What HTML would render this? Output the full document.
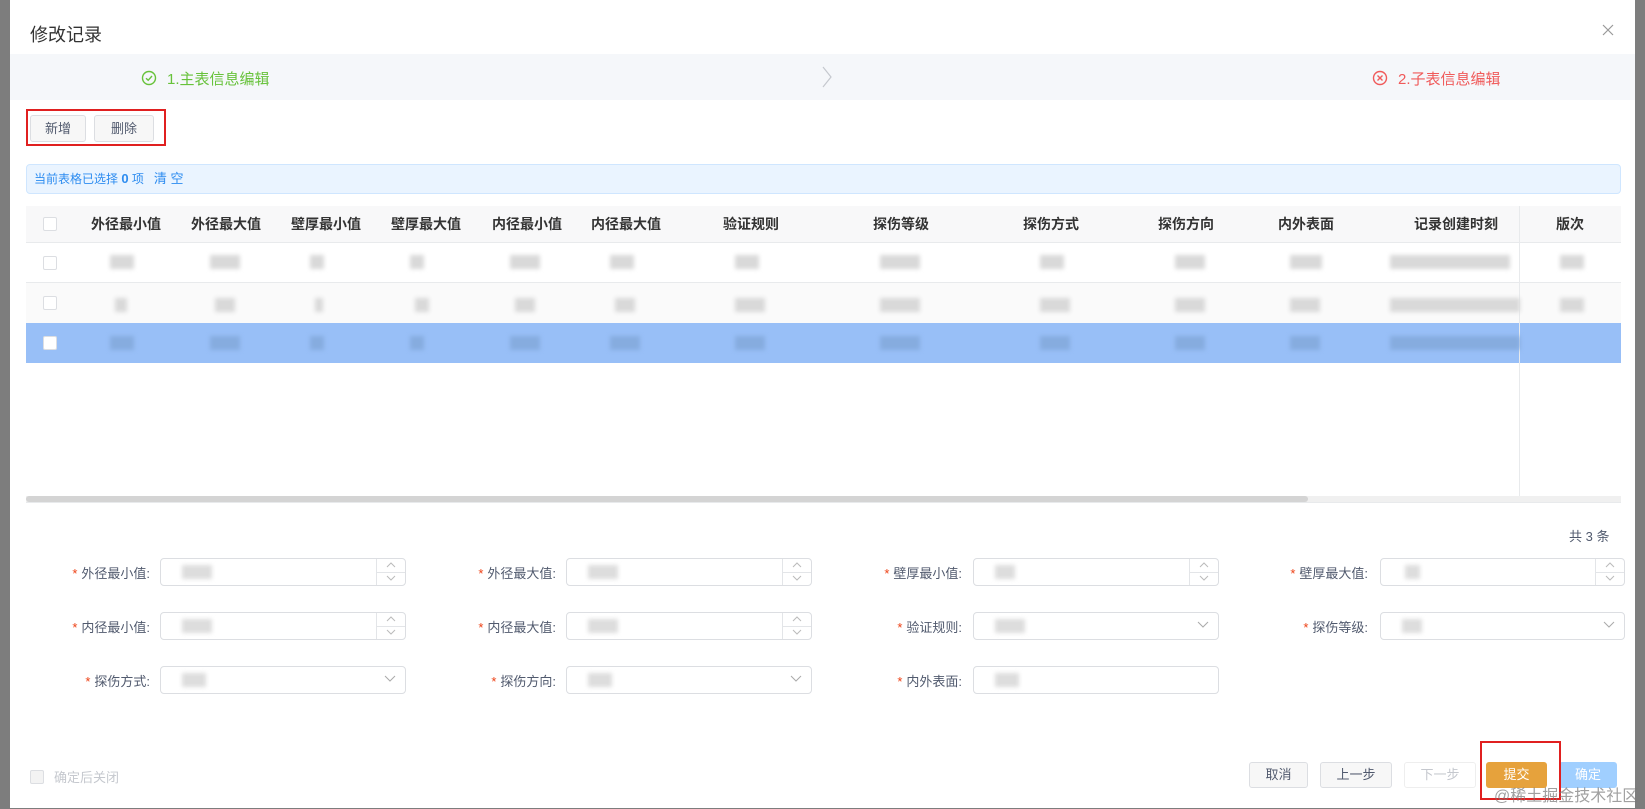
<!DOCTYPE html>
<html><head><meta charset="utf-8"><style>
*{box-sizing:border-box;margin:0;padding:0}
body{width:1645px;height:809px;overflow:hidden;background:#7d7d7d;font-family:"Liberation Sans","Noto Sans CJK SC",sans-serif;position:relative;color:#515a6e}
.a{position:absolute}
.dlg{position:absolute;left:10px;top:0;width:1625px;height:808px;background:#fff}
.btn{position:absolute;border:1px solid #dcdee2;border-radius:3px;background:#f7f7f7;font-size:13px;text-align:center;color:#515a6e}
.th{position:absolute;top:206px;height:37px;line-height:37px;font-size:14px;font-weight:bold;color:#333;transform:translateX(-50%);white-space:nowrap}
.blk{position:absolute;height:14px;background:#d9d9d9;filter:blur(2px)}
.lbl{position:absolute;font-size:13px;color:#515a6e;text-align:right;width:140px}
.lbl b{color:#ed4014;font-weight:normal;margin-right:4px}
.inp{position:absolute;height:28px;border:1px solid #dcdee2;border-radius:4px;background:#fff}
.sp{position:absolute;right:0;top:0;width:29px;height:26px;border-left:1px solid #e3e5e8}
.sp:after{content:"";position:absolute;left:0;right:0;top:13px;border-top:1px solid #e3e5e8}
.sp svg{position:absolute;left:9px}
.cb{position:absolute;width:14px;height:14px;border:1px solid #dcdee2;border-radius:2px;background:#fff}
</style></head><body>
<div class="dlg">
<div class="a" style="left:20px;top:21px;font-size:18px;color:#333">修改记录</div>
<svg class="a" style="left:1592px;top:24px" width="12" height="12"><path d="M1 1L11 11M11 1L1 11" stroke="#999" stroke-width="1.2"/></svg>
<div class="a" style="left:0;top:54px;width:1625px;height:46px;background:#f5f7fa"></div>
<svg class="a" style="left:131px;top:70px" width="16" height="16"><circle cx="8" cy="8" r="6.5" fill="none" stroke="#67c23a" stroke-width="1.4"/><path d="M5 8.2L7.2 10.3L11 6" fill="none" stroke="#67c23a" stroke-width="1.4"/></svg>
<div class="a" style="left:157px;top:68px;font-size:15px;color:#67c23a">1.主表信息编辑</div>
<svg class="a" style="left:811px;top:66px" width="12" height="22"><path d="M2 1L10 11L2 21" fill="none" stroke="#c5c8ce" stroke-width="1.2"/></svg>
<svg class="a" style="left:1362px;top:70px" width="16" height="16"><circle cx="8" cy="8" r="6.5" fill="none" stroke="#f05a5a" stroke-width="1.4"/><path d="M5.5 5.5L10.5 10.5M10.5 5.5L5.5 10.5" stroke="#f05a5a" stroke-width="1.4"/></svg>
<div class="a" style="left:1388px;top:68px;font-size:15px;color:#f05a5a">2.子表信息编辑</div>
<div class="a" style="left:16px;top:109px;width:140px;height:37px;border:2px solid #e02020"></div>
<div class="btn" style="left:20px;top:115px;width:56px;height:27px;line-height:25px">新增</div>
<div class="btn" style="left:84px;top:115px;width:60px;height:27px;line-height:25px">删除</div>
<div class="a" style="left:16px;top:164px;width:1595px;height:30px;background:#eaf4ff;border:1px solid #cfe6ff;border-radius:4px;font-size:12px;color:#2d8cf0;line-height:28px;padding-left:7px">当前表格已选择 <b style="font-size:13px">0</b> 项 &nbsp; <span style="font-size:13px">清 空</span></div>
<div class="a" style="left:16px;top:206px;width:1595px;height:37px;background:#f8f8f9;border-bottom:1px solid #e8eaec"></div>
<div class="a" style="left:16px;top:243px;width:1595px;height:40px;background:#fff;border-bottom:1px solid #e8eaec"></div>
<div class="a" style="left:16px;top:283px;width:1595px;height:40px;background:#fafafa"></div>
<div class="a" style="left:16px;top:323px;width:1595px;height:40px;background:#98bff7"></div>
<div class="a" style="left:1509px;top:206px;width:1px;height:290px;background:#e8eaec"></div>
<div class="a" style="left:16px;top:496px;width:1595px;height:6px;background:#f0f0f0"></div>
<div class="a" style="left:16px;top:496px;width:1282px;height:6px;background:#d4d4d4;border-radius:3px"></div>
<div class="a" style="left:16px;top:502px;width:1595px;height:1px;background:#e8eaec"></div>
<div class="cb" style="left:33px;top:217px"></div>
<div class="cb" style="left:33px;top:256px"></div>
<div class="cb" style="left:33px;top:296px"></div>
<div class="cb" style="left:33px;top:336px"></div>
<div class="th" style="left:116px">外径最小值</div>
<div class="th" style="left:216px">外径最大值</div>
<div class="th" style="left:316px">壁厚最小值</div>
<div class="th" style="left:416px">壁厚最大值</div>
<div class="th" style="left:517px">内径最小值</div>
<div class="th" style="left:616px">内径最大值</div>
<div class="th" style="left:741px">验证规则</div>
<div class="th" style="left:891px">探伤等级</div>
<div class="th" style="left:1041px">探伤方式</div>
<div class="th" style="left:1176px">探伤方向</div>
<div class="th" style="left:1296px">内外表面</div>
<div class="th" style="left:1446px">记录创建时刻</div>
<div class="th" style="left:1560px">版次</div>
<div class="blk" style="left:100px;top:255px;width:24px"></div><div class="blk" style="left:200px;top:255px;width:30px"></div><div class="blk" style="left:300px;top:255px;width:14px"></div><div class="blk" style="left:400px;top:255px;width:14px"></div><div class="blk" style="left:500px;top:255px;width:30px"></div><div class="blk" style="left:600px;top:255px;width:24px"></div><div class="blk" style="left:725px;top:255px;width:24px"></div><div class="blk" style="left:870px;top:255px;width:40px"></div><div class="blk" style="left:1030px;top:255px;width:24px"></div><div class="blk" style="left:1165px;top:255px;width:30px"></div><div class="blk" style="left:1280px;top:255px;width:32px"></div><div class="blk" style="left:1380px;top:255px;width:120px"></div><div class="blk" style="left:1550px;top:255px;width:24px"></div>
<div class="blk" style="left:105px;top:298px;width:12px"></div><div class="blk" style="left:205px;top:298px;width:20px"></div><div class="blk" style="left:305px;top:298px;width:8px"></div><div class="blk" style="left:405px;top:298px;width:14px"></div><div class="blk" style="left:505px;top:298px;width:20px"></div><div class="blk" style="left:605px;top:298px;width:20px"></div><div class="blk" style="left:725px;top:298px;width:30px"></div><div class="blk" style="left:870px;top:298px;width:40px"></div><div class="blk" style="left:1030px;top:298px;width:30px"></div><div class="blk" style="left:1165px;top:298px;width:30px"></div><div class="blk" style="left:1280px;top:298px;width:30px"></div><div class="blk" style="left:1380px;top:298px;width:130px"></div><div class="blk" style="left:1550px;top:298px;width:24px"></div>
<div class="blk" style="left:100px;top:336px;width:24px;background:#86acdf"></div><div class="blk" style="left:200px;top:336px;width:30px;background:#86acdf"></div><div class="blk" style="left:300px;top:336px;width:14px;background:#86acdf"></div><div class="blk" style="left:400px;top:336px;width:14px;background:#86acdf"></div><div class="blk" style="left:500px;top:336px;width:30px;background:#86acdf"></div><div class="blk" style="left:600px;top:336px;width:30px;background:#86acdf"></div><div class="blk" style="left:725px;top:336px;width:30px;background:#86acdf"></div><div class="blk" style="left:870px;top:336px;width:40px;background:#86acdf"></div><div class="blk" style="left:1030px;top:336px;width:30px;background:#86acdf"></div><div class="blk" style="left:1165px;top:336px;width:30px;background:#86acdf"></div><div class="blk" style="left:1280px;top:336px;width:30px;background:#86acdf"></div><div class="blk" style="left:1380px;top:336px;width:130px;background:#86acdf"></div>
<div class="a" style="left:1559px;top:526px;font-size:13px;color:#515a6e">共 3 条</div>
<!-- form -->
<div class="lbl" style="left:0;top:563px"><b>*</b>外径最小值:</div>
<div class="inp" style="left:150px;top:558px;width:246px"><div class="sp"><svg style="top:3px" width="10" height="6"><path d="M1 5L5 1L9 5" fill="none" stroke="#bbb"/></svg><svg style="top:16px" width="10" height="6"><path d="M1 1L5 5L9 1" fill="none" stroke="#bbb"/></svg></div></div>
<div class="lbl" style="left:406px;top:563px"><b>*</b>外径最大值:</div>
<div class="inp" style="left:556px;top:558px;width:246px"><div class="sp"><svg style="top:3px" width="10" height="6"><path d="M1 5L5 1L9 5" fill="none" stroke="#bbb"/></svg><svg style="top:16px" width="10" height="6"><path d="M1 1L5 5L9 1" fill="none" stroke="#bbb"/></svg></div></div>
<div class="lbl" style="left:812px;top:563px"><b>*</b>壁厚最小值:</div>
<div class="inp" style="left:963px;top:558px;width:246px"><div class="sp"><svg style="top:3px" width="10" height="6"><path d="M1 5L5 1L9 5" fill="none" stroke="#bbb"/></svg><svg style="top:16px" width="10" height="6"><path d="M1 1L5 5L9 1" fill="none" stroke="#bbb"/></svg></div></div>
<div class="lbl" style="left:1218px;top:563px"><b>*</b>壁厚最大值:</div>
<div class="inp" style="left:1370px;top:558px;width:245px"><div class="sp"><svg style="top:3px" width="10" height="6"><path d="M1 5L5 1L9 5" fill="none" stroke="#bbb"/></svg><svg style="top:16px" width="10" height="6"><path d="M1 1L5 5L9 1" fill="none" stroke="#bbb"/></svg></div></div>
<div class="lbl" style="left:0;top:617px"><b>*</b>内径最小值:</div>
<div class="inp" style="left:150px;top:612px;width:246px"><div class="sp"><svg style="top:3px" width="10" height="6"><path d="M1 5L5 1L9 5" fill="none" stroke="#bbb"/></svg><svg style="top:16px" width="10" height="6"><path d="M1 1L5 5L9 1" fill="none" stroke="#bbb"/></svg></div></div>
<div class="lbl" style="left:406px;top:617px"><b>*</b>内径最大值:</div>
<div class="inp" style="left:556px;top:612px;width:246px"><div class="sp"><svg style="top:3px" width="10" height="6"><path d="M1 5L5 1L9 5" fill="none" stroke="#bbb"/></svg><svg style="top:16px" width="10" height="6"><path d="M1 1L5 5L9 1" fill="none" stroke="#bbb"/></svg></div></div>
<div class="lbl" style="left:812px;top:617px"><b>*</b>验证规则:</div>
<div class="inp" style="left:963px;top:612px;width:246px"></div>
<div class="lbl" style="left:1218px;top:617px"><b>*</b>探伤等级:</div>
<div class="inp" style="left:1370px;top:612px;width:245px"></div>
<div class="lbl" style="left:0;top:671px"><b>*</b>探伤方式:</div>
<div class="inp" style="left:150px;top:666px;width:246px"></div>
<div class="lbl" style="left:406px;top:671px"><b>*</b>探伤方向:</div>
<div class="inp" style="left:556px;top:666px;width:246px"></div>
<div class="lbl" style="left:812px;top:671px"><b>*</b>内外表面:</div>
<div class="inp" style="left:963px;top:666px;width:246px"></div>
<svg class="a" style="left:374px;top:675px" width="12" height="8"><path d="M1 1L6 6L11 1" fill="none" stroke="#aaa"/></svg>
<svg class="a" style="left:780px;top:675px" width="12" height="8"><path d="M1 1L6 6L11 1" fill="none" stroke="#aaa"/></svg>
<svg class="a" style="left:1187px;top:621px" width="12" height="8"><path d="M1 1L6 6L11 1" fill="none" stroke="#aaa"/></svg>
<svg class="a" style="left:1593px;top:621px" width="12" height="8"><path d="M1 1L6 6L11 1" fill="none" stroke="#aaa"/></svg>
<div class="blk" style="left:172px;top:565px;width:30px;background:#ddd"></div><div class="blk" style="left:578px;top:565px;width:30px;background:#ddd"></div><div class="blk" style="left:985px;top:565px;width:20px;background:#ddd"></div><div class="blk" style="left:1395px;top:565px;width:15px;background:#ddd"></div>
<div class="blk" style="left:172px;top:619px;width:30px;background:#ddd"></div><div class="blk" style="left:578px;top:619px;width:30px;background:#ddd"></div><div class="blk" style="left:985px;top:619px;width:30px;background:#ddd"></div><div class="blk" style="left:1392px;top:619px;width:20px;background:#ddd"></div>
<div class="blk" style="left:172px;top:673px;width:24px;background:#ddd"></div><div class="blk" style="left:578px;top:673px;width:24px;background:#ddd"></div><div class="blk" style="left:985px;top:673px;width:24px;background:#ddd"></div>
<!-- footer -->
<div class="cb" style="left:20px;top:770px;background:#f3f3f3"></div>
<div class="a" style="left:44px;top:767px;font-size:13px;color:#c5c8ce">确定后关闭</div>
<div class="btn" style="left:1239px;top:762px;width:59px;height:26px;line-height:24px">取消</div>
<div class="btn" style="left:1310px;top:762px;width:72px;height:26px;line-height:24px">上一步</div>
<div class="btn" style="left:1394px;top:762px;width:72px;height:26px;line-height:24px;background:#fff;color:#c5c8ce;border-color:#eee">下一步</div>
<div class="btn" style="left:1476px;top:762px;width:61px;height:26px;line-height:24px;background:#e6a23c;border-color:#e6a23c;color:#fff">提交</div>
<div class="btn" style="left:1549px;top:762px;width:58px;height:26px;line-height:24px;background:#a0cfff;border-color:#a0cfff;color:#fff">确定</div>
<div class="a" style="left:1470px;top:741px;width:81px;height:59px;border:2px solid #e02020"></div>
</div>
<div class="a" style="left:1494px;top:782px;font-size:16px;color:rgba(120,120,120,.7);white-space:nowrap">@稀土掘金技术社区</div>
</body></html>
